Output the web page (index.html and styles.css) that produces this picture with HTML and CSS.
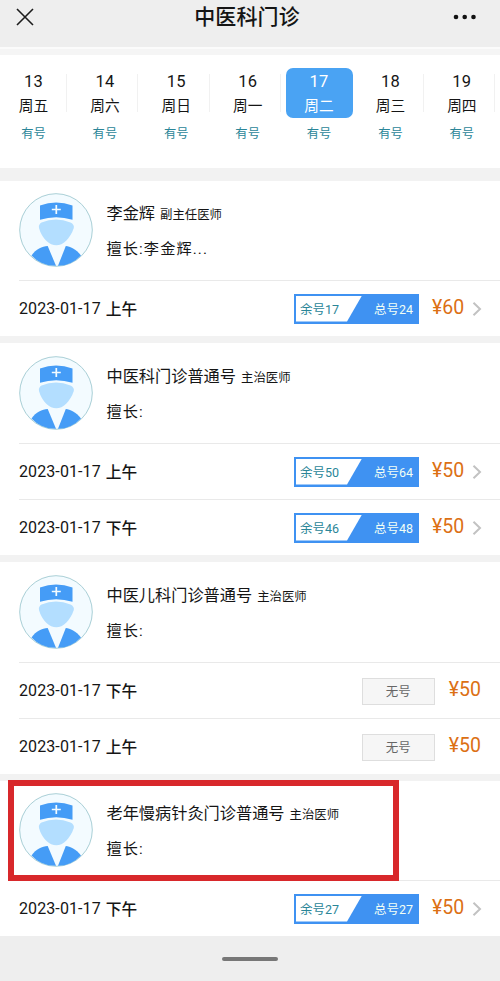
FILE: index.html
```html
<!DOCTYPE html>
<html lang="zh-CN">
<head>
<meta charset="utf-8">
<title>中医科门诊</title>
<link rel="stylesheet" href="styles.css">
</head>
<body>
<svg class="defs" width="0" height="0" aria-hidden="true">
  <symbol id="doctor" viewBox="0 0 74 74">
    <circle cx="37" cy="37" r="36.3" fill="#f3fbff" stroke="#a9cfd6" stroke-width="1"/>
    <path d="M21 12.5Q37 6.500 53.500 12.500V26.700Q37 21.700 21 26.700Z" fill="#459cf6"/>
    <path d="M37.300 12v9M32.800 16.500h9" stroke="#f3fbff" stroke-width="1.700"/>
    <path d="M22.500 29.500Q37 23.500 51.500 29.500Q55.500 31.500 54.800 35C51 46 44 52.300 37.300 52.300S23 46 20 35Q19.300 31.500 22.500 29.500Z" fill="#b3deff"/>
    <path d="M12.500 62.500C17 56 23 53.200 28.700 53L37 72.800Q22 73 12.500 62.500Z" fill="#459cf6"/>
    <path d="M62 62.500C57 56 51 53.200 46.800 53L39 72.800Q52 73 62 62.500Z" fill="#459cf6"/>
  </symbol>
  <symbol id="chevron" viewBox="0 0 10 16"><path d="M1.500 1.800L8 8L1.500 14.200" fill="none" stroke="#c2c2c2" stroke-width="2"/></symbol>
</svg>

<header class="bar">
  <svg class="close" viewBox="0 0 18 18"><path d="M1 1L17 17M17 1L1 17" stroke="#1c1c1c" stroke-width="1.600" fill="none"/></svg>
  <h1>中医科门诊</h1>
  <svg class="more" viewBox="0 0 24 6"><circle cx="3" cy="3" r="2.300"/><circle cx="11.700" cy="3" r="2.300"/><circle cx="20.500" cy="3" r="2.300"/></svg>
</header>

<ul class="dates">
  <li><div class="day"><b>13</b><span>周五</span></div><em>有号</em></li>
  <li><div class="day"><b>14</b><span>周六</span></div><em>有号</em></li>
  <li><div class="day"><b>15</b><span>周日</span></div><em>有号</em></li>
  <li><div class="day"><b>16</b><span>周一</span></div><em>有号</em></li>
  <li><div class="day selected"><b>17</b><span>周二</span></div><em>有号</em></li>
  <li><div class="day"><b>18</b><span>周三</span></div><em>有号</em></li>
  <li><div class="day"><b>19</b><span>周四</span></div><em>有号</em></li>
</ul>

<main>
  <section class="card compact">
    <div class="doctor">
      <svg class="avatar"><use href="#doctor"/></svg>
      <div class="info"><p><span class="name">李金辉</span><small>副主任医师</small></p><p class="skill">擅长:李金辉...</p></div>
    </div>
    <div class="slot"><time>2023-01-17</time><strong>上午</strong><div class="quota"><span class="left">余号17</span><span class="total">总号24</span></div><span class="price">¥60</span><svg class="go"><use href="#chevron"/></svg></div>
  </section>

  <section class="card">
    <div class="doctor">
      <svg class="avatar"><use href="#doctor"/></svg>
      <div class="info"><p><span class="name">中医科门诊普通号</span><small>主治医师</small></p><p class="skill">擅长:</p></div>
    </div>
    <div class="slot"><time>2023-01-17</time><strong>上午</strong><div class="quota"><span class="left">余号50</span><span class="total">总号64</span></div><span class="price">¥50</span><svg class="go"><use href="#chevron"/></svg></div>
    <div class="slot"><time>2023-01-17</time><strong>下午</strong><div class="quota"><span class="left">余号46</span><span class="total">总号48</span></div><span class="price">¥50</span><svg class="go"><use href="#chevron"/></svg></div>
  </section>

  <section class="card">
    <div class="doctor">
      <svg class="avatar"><use href="#doctor"/></svg>
      <div class="info"><p><span class="name">中医儿科门诊普通号</span><small>主治医师</small></p><p class="skill">擅长:</p></div>
    </div>
    <div class="slot"><time>2023-01-17</time><strong>下午</strong><div class="none">无号</div><span class="price">¥50</span></div>
    <div class="slot"><time>2023-01-17</time><strong>上午</strong><div class="none">无号</div><span class="price">¥50</span></div>
  </section>

  <section class="card compact marked">
    <div class="doctor">
      <svg class="avatar"><use href="#doctor"/></svg>
      <div class="info"><p><span class="name">老年慢病针灸门诊普通号</span><small>主治医师</small></p><p class="skill">擅长:</p></div>
    </div>
    <div class="slot"><time>2023-01-17</time><strong>下午</strong><div class="quota"><span class="left">余号27</span><span class="total">总号27</span></div><span class="price">¥50</span><svg class="go"><use href="#chevron"/></svg></div>
  </section>
</main>

<footer class="home"><i></i></footer>
</body>
</html>
```
FILE: styles.css
```css
*, *::before, *::after { box-sizing: border-box; margin: 0; padding: 0; }
body {
  width: 500px;
  height: 981px;
  overflow: hidden;
  background: #f2f2f2;
  color: #151515;
  font-family: Roboto, "Noto Sans CJK SC", sans-serif;
}
.defs { position: absolute; }

.bar {
  display: grid;
  grid-template-columns: 60px 1fr 60px;
  align-items: center;
  height: 49px;
  padding-bottom: 13px;
  background: #eee;
  border-bottom: 2px solid #fbfbfb;
}
.close { width: 18px; height: 18px; margin-left: 16px; }
.bar h1 { padding-right: 6px; font-size: 21px; line-height: 34px; font-weight: 500; text-align: center; letter-spacing: .1px; }
.more { width: 24px; height: 6px; margin-left: 13px; fill: #111; }

.dates {
  display: flex;
  gap: 4.400px;
  height: 119px;
  padding-top: 13px;
  border-top: 6px solid #f5f5f5;
  background: #fff;
  list-style: none;
}
.dates li { flex: none; width: 67px; text-align: center; }
.day {
  display: flex;
  flex-direction: column;
  height: 50px;
  padding-top: 1px;
  background: linear-gradient(#f1f1f1, #f1f1f1) right 6px / 1px 38px no-repeat;
}
.day b { font-size: 16.500px; font-weight: 400; line-height: 25px; letter-spacing: .2px; }
.day span { font-size: 14.700px; line-height: 24px; }
.day.selected { background: #4aa3f3; border-radius: 7px; color: #fff; }
.dates em { display: block; margin-top: 7px; font-size: 12.300px; line-height: 18px; font-style: normal; color: #2b8698; }

main { display: flex; flex-direction: column; gap: 7px; padding-top: 13px; }
.card { background: #fff; }
.doctor { display: flex; height: 100px; padding: 13px 0 0 19px; }
.compact .doctor { height: 99px; padding-top: 12px; }
.avatar { flex: none; width: 74px; height: 74px; }
.info { margin-left: 13.500px; padding-top: 7px; }
.info p { display: flex; align-items: baseline; height: 35px; line-height: 28px; white-space: nowrap; }
.name { font-size: 16.200px; }
.info small { margin-left: 5px; font-size: 12.400px; }
.info .skill { font-size: 15.200px; letter-spacing: 1.100px; }

.slot {
  display: flex;
  align-items: center;
  height: 56px;
  margin-left: 19px;
  padding-right: 18px;
  border-top: 1px solid #e9e9e9;
}
.slot time { font-size: 16px; letter-spacing: .1px; }
.slot strong { margin: -1px 0 0 5px; font-size: 15.700px; font-weight: 500; }
.quota {
  position: relative;
  display: flex;
  justify-content: space-between;
  align-items: center;
  width: 125px;
  height: 30px;
  margin-left: auto;
  padding: 0 6px 0 6px;
  background: #3f92f2;
  font-size: 12.500px;
}
.quota::before {
  content: "";
  position: absolute;
  inset: 2px 57px 2px 2px;
  background: #fff;
  clip-path: polygon(0 0, 100% 0, 51px 100%, 0 100%);
}
.left { position: relative; color: #2b8698; }
.total { color: #f2fff5; }
.price { margin: -2px 0 0 13px; color: #dc7014; font-size: 19.500px; }
.quota + .price { width: 33px; }
.go { width: 10px; height: 16px; margin-left: 7px; }
.none {
  width: 73px;
  height: 27px;
  margin: 1px 1px 0 auto;
  border: 1px solid #dedede;
  background: #f6f6f6;
  color: #666;
  font-size: 12.500px;
  line-height: 25px;
  text-align: center;
}
.none + .price { margin-right: 1px; }

.marked { position: relative; }
.marked::after {
  content: "";
  position: absolute;
  left: 8px;
  top: -1px;
  width: 391px;
  height: 101px;
  border: 6px solid #d8282b;
}

.home { display: flex; justify-content: center; height: 45px; padding-top: 21px; background: #eee; }
.home i { width: 56px; height: 4px; border-radius: 2px; background: #777; }
```
